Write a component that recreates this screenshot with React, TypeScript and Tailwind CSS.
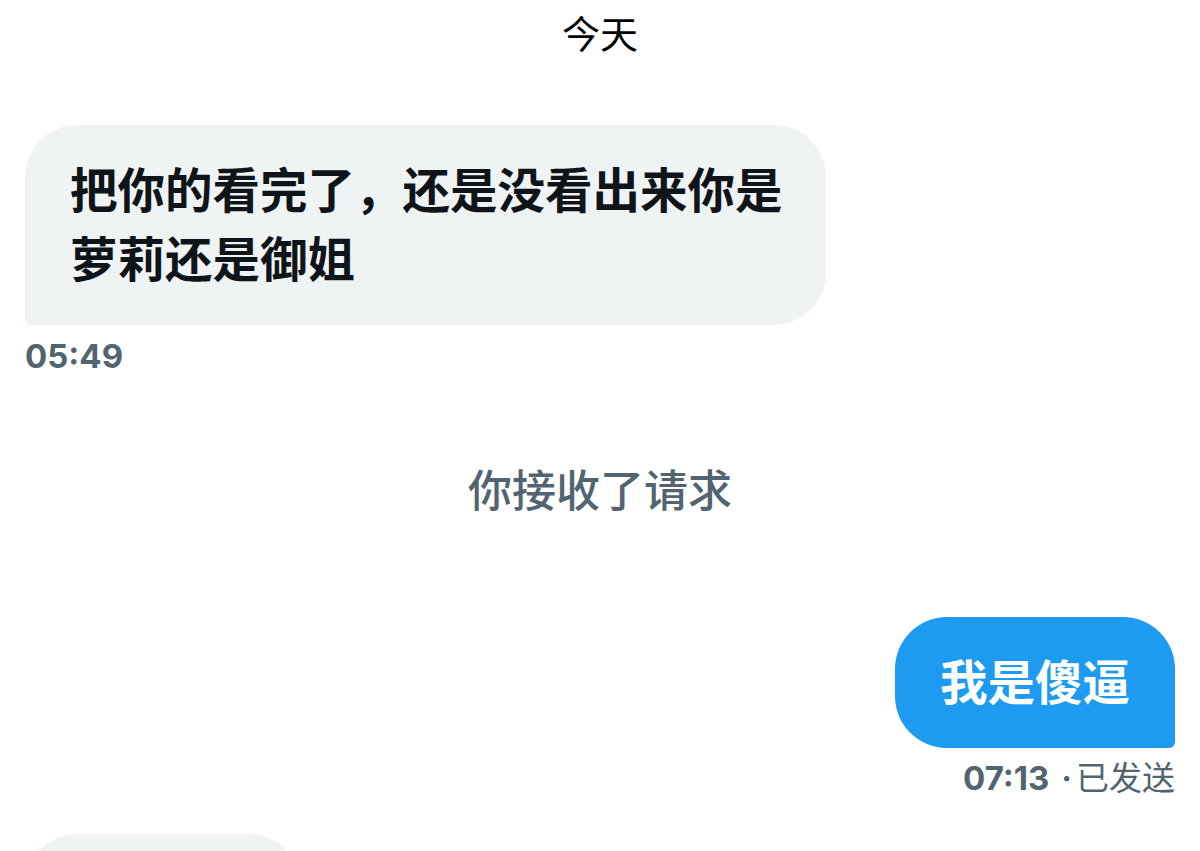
import React from 'react';

const cjk = '"Inter", "Noto Sans CJK SC", sans-serif';

function Bubble({ children, mine = false, className = '' }: { children: React.ReactNode; mine?: boolean; className?: string }) {
  const shape = mine
    ? 'bg-[#1d9bf0] text-white rounded-[52px] rounded-br-[6px] pr-[45px]'
    : 'bg-[#eff3f4] text-[#0f1419] rounded-[52px] rounded-bl-[6px] pr-[30px]';
  return (
    <div className={`${shape} pl-[45px] py-[31px] text-[47.5px] leading-[69px] font-bold ${className}`}>
      {children}
    </div>
  );
}

export default function App() {
  return (
    <div className="w-[1200px] h-[851px] overflow-hidden bg-white px-[25px]" style={{ fontFamily: cjk }}>
      <div className="pt-[12px] text-center text-[38px] leading-[44px] text-black">今天</div>

      <div className="mt-[69px]">
        <Bubble className="w-[801px]">把你的看完了，还是没看出来你是萝莉还是御姐</Bubble>
      </div>
      <div className="mt-[11px] text-[33px] leading-[40px] font-bold text-[#536471]">05:49</div>

      <div className="mt-[87px] text-center text-[44px] leading-[56px] font-medium text-[#536471]">你接收了请求</div>

      <div className="mt-[98px] flex justify-end">
        <Bubble mine>我是傻逼</Bubble>
      </div>
      <div className="mt-[10px] flex justify-end items-baseline text-[#536471] leading-[40px]">
        <span className="text-[33px] font-bold">07:13</span>
        <span className="ml-[12px] mr-[4px] text-[32px] font-bold">·</span>
        <span className="text-[33px]">已发送</span>
      </div>

      <div className="mt-[35px] h-[120px] w-[275px] rounded-[52px] bg-[#eff3f4]" />
    </div>
  );
}
